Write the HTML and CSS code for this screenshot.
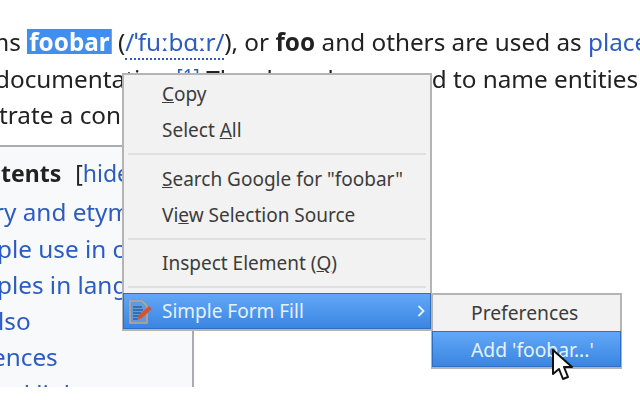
FILE: index.html
```html
<!DOCTYPE html>
<html lang="en">
<head>
  <meta charset="UTF-8">
  <title>Foobar</title>
  <link rel="stylesheet" href="styles.css">
</head>
<body>
  <div class="page">
    <div class="article">
      <p class="line line-one">ms <span class="selected">foobar</span> (<a class="ipa">/ˈfuːbɑːr/</a>), or <b>foo</b> and others are used as <a>placeholder</a></p>
      <p class="line line-two">documentation.<sup class="ref"><a>[1]</a></sup> They have been used to name entities</p>
      <p class="line line-three">trate a concept</p>
    </div>

    <div class="toc">
      <p class="toc-title"><b>tents</b><span class="toc-toggle">[<a>hide</a>]</span></p>
      <ul class="toc-list">
        <li class="cut-1"><a>ry and etymology</a></li>
        <li class="cut-2"><a>ple use in computer</a></li>
        <li class="cut-3"><a>ples in languages</a></li>
        <li class="cut-4"><a>lso</a></li>
        <li class="cut-5"><a>ences</a></li>
        <li class="cut-6"><a>nal links</a></li>
      </ul>
    </div>

    <div class="menu">
      <div class="menu-item"><span><u>C</u>opy</span></div>
      <div class="menu-item"><span>Select <u>A</u>ll</span></div>
      <div class="menu-sep"></div>
      <div class="menu-item"><span><u>S</u>earch Google for "foobar"</span></div>
      <div class="menu-item"><span>Vi<u>e</u>w Selection Source</span></div>
      <div class="menu-sep"></div>
      <div class="menu-item"><span>Inspect Element (<u>Q</u>)</span></div>
      <div class="menu-sep"></div>
      <div class="menu-item active">
        <svg class="form-icon" width="26" height="26" viewBox="0 0 26 26">
          <path d="M2 2h12l5 5v17H2z" fill="#5f9be0" stroke="#c9a27c" stroke-width="1.6"/>
          <path d="M5 8h9M5 11h10M5 14h8M5 17h6M5 20h5" stroke="#2d5f9e" stroke-width="1.5"/>
          <path d="M9 21l2-5 10-9 3 3-10 9z" fill="#d8542f"/>
        </svg>
        <span>Simple Form Fill</span>
        <svg class="arrow" width="8" height="12" viewBox="0 0 8 12"><path d="M1.5 1l5 5-5 5" fill="none" stroke="#e8f2ff" stroke-width="1.8"/></svg>
      </div>
    </div>

    <div class="submenu">
      <div class="sub-item">Preferences</div>
      <div class="sub-item active">Add 'foobar...'</div>
    </div>

    <svg class="cursor" width="24" height="34" viewBox="0 0 24 34">
      <path d="M2 2v24l6-5 4 10 5-2-4-10h8z" fill="#fff" stroke="#111" stroke-width="2" stroke-linejoin="round"/>
    </svg>
  </div>
</body>
</html>
```

FILE: styles.css
```css
body {
  margin: 0;
  background-color: #fff;
  font-family: "Noto Sans", sans-serif;
  color: #222;
}

a {
  color: #2b5cc4;
}

.page {
  position: relative;
  width: 640px;
  height: 387px;
  overflow: hidden;
  filter: blur(0.5px);
}

.article {
  padding-top: 24px;
  white-space: nowrap;
  font-size: 24.3px;
  line-height: 36.5px;
}

.line {
  margin: 0;
}

.line-one {
  margin-left: -13.5px;
}

.line-two {
  margin-left: -5px;
}

.line-three {
  margin-left: -1px;
}

.selected {
  background: linear-gradient(#3f8ef0, #3f8ef0) center / 100% 25px no-repeat;
  color: #fff;
  font-weight: 700;
  padding: 0 2px;
}

.ipa {
  border-bottom: 2px dotted #2b5cc4;
  letter-spacing: -0.2px;
}

.ref {
  font-size: 19px;
  line-height: 0;
  vertical-align: 5px;
}

.toc {
  width: 194px;
  margin-top: 11px;
  height: 260px;
  padding-top: 8px;
  box-sizing: border-box;
  background-color: #f8f9fa;
  border-top: 2px solid #a9adb3;
  border-right: 2px solid #a9adb3;
  font-size: 24.3px;
  line-height: 36.3px;
  white-space: nowrap;
  overflow: hidden;
}

.toc-title {
  margin: 0 0 3.5px 1px;
  font-size: 23px;
}

.toc-toggle {
  margin-left: 14px;
}

.toc-list {
  list-style: none;
  margin: 0;
  padding: 0;
}

.cut-1 { margin-left: -6px; }
.cut-2 { margin-left: -3px; }
.cut-3 { margin-left: -3px; }
.cut-4 { margin-left: -2px; }
.cut-5 { margin-left: -8px; }
.cut-6 { margin-left: -5px; }

.menu {
  position: absolute;
  left: 122px;
  top: 73px;
  width: 310px;
  box-sizing: border-box;
  padding-top: 0.5px;
  background-color: #f2f2f2;
  border: 2px solid #b4b4b4;
  font-size: 19px;
  color: #3c3c3c;
}

.menu-item {
  display: flex;
  align-items: center;
  height: 36.5px;
  padding-left: 38px;
}

.menu-sep {
  height: 2px;
  margin: 4.9px 4px;
  background-color: #e0e0e0;
}

.menu-item.active {
  position: relative;
  height: 33.5px;
  padding-left: 38px;
  background: linear-gradient(#62a8f7, #3a85e2);
  border: 1px solid #2e6fc2;
  margin-left: -1px;
  margin-right: -1px;
  color: #e6f1ff;
}

.form-icon {
  position: absolute;
  left: 4px;
  top: 5px;
}

.arrow {
  position: absolute;
  right: 5px;
  top: 11px;
}

.submenu {
  position: absolute;
  left: 431px;
  top: 293px;
  width: 191px;
  box-sizing: border-box;
  background-color: #f2f2f2;
  border: 2px solid #b4b4b4;
  font-size: 19.3px;
  color: #3c3c3c;
}

.sub-item {
  display: flex;
  align-items: center;
  height: 36px;
  box-sizing: border-box;
  padding: 0 0 2px 38px;
}

.sub-item.active {
  margin: 0 -1px;
  padding: 1px 0 0 38px;
  background: linear-gradient(#62a8f7, #3a85e2);
  border: 1px solid #2e6fc2;
  color: #e6f1ff;
}

.cursor {
  position: absolute;
  left: 551px;
  top: 348px;
}
```
